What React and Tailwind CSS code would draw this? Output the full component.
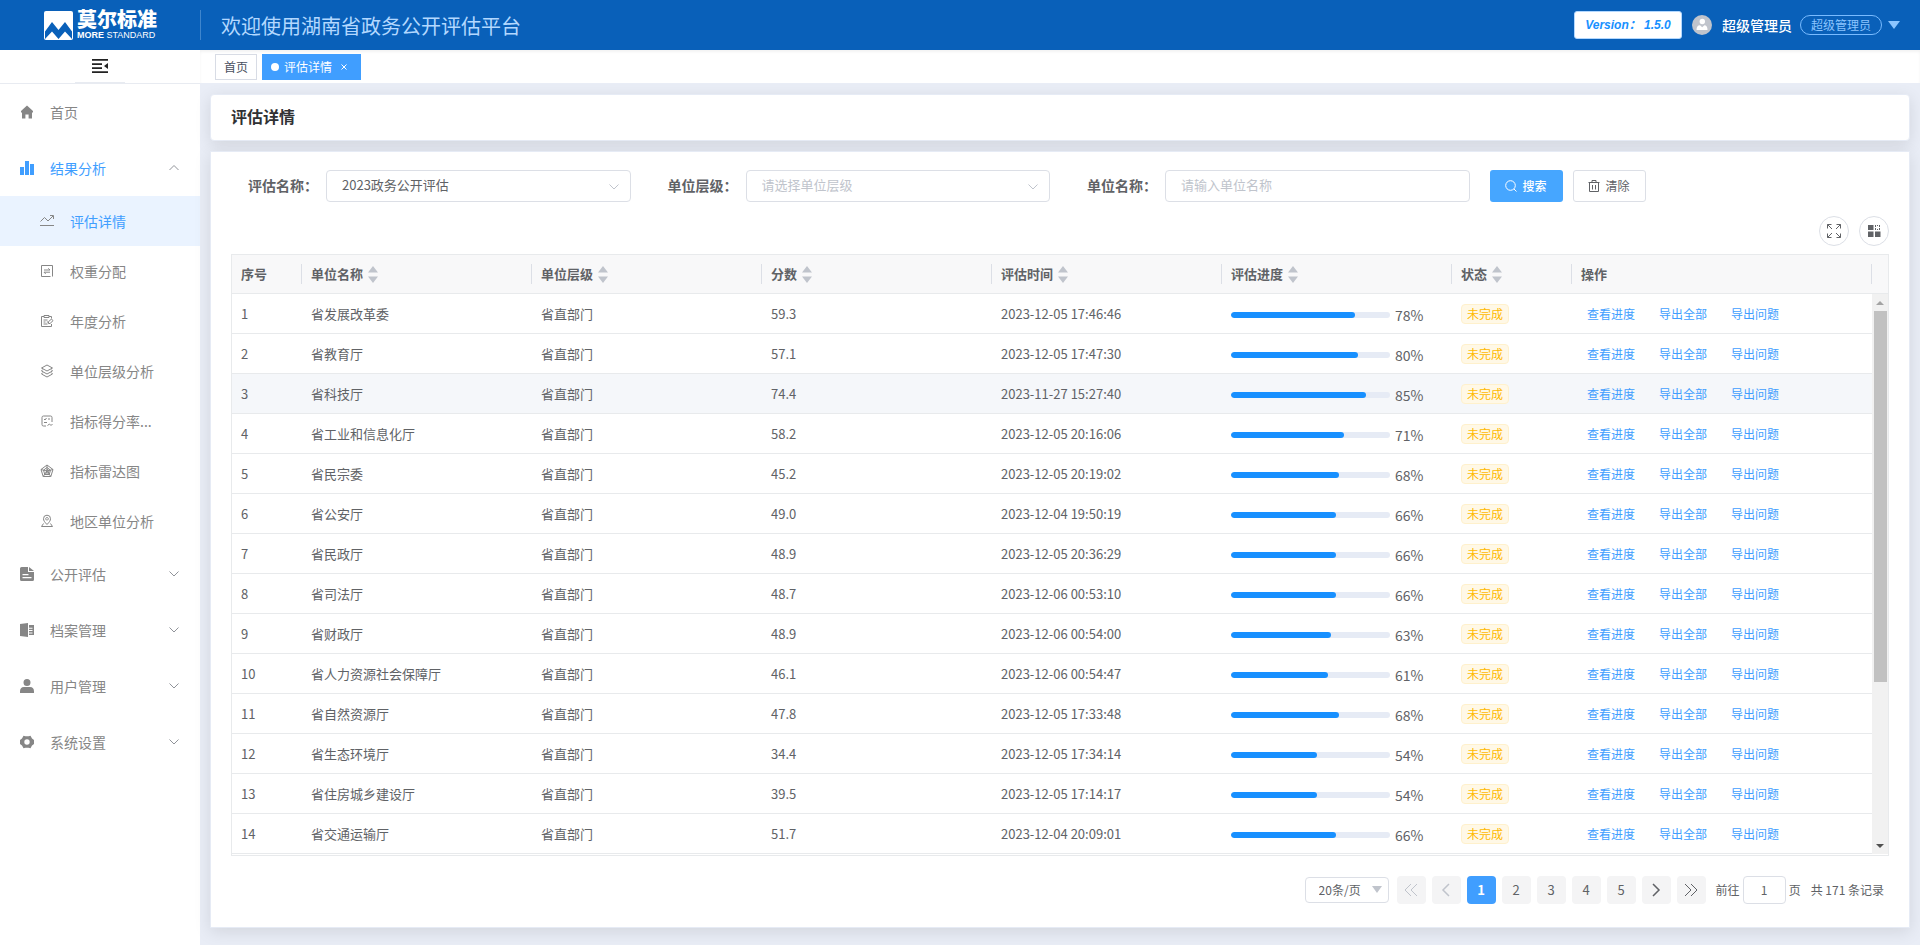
import React, { useState } from 'react'

const rows = [
    { name: "省发展改革委", score: "59.3", time: "2023-12-05 17:46:46", progress: 78 },
    { name: "省教育厅", score: "57.1", time: "2023-12-05 17:47:30", progress: 80 },
    { name: "省科技厅", score: "74.4", time: "2023-11-27 15:27:40", progress: 85 },
    { name: "省工业和信息化厅", score: "58.2", time: "2023-12-05 20:16:06", progress: 71 },
    { name: "省民宗委", score: "45.2", time: "2023-12-05 20:19:02", progress: 68 },
    { name: "省公安厅", score: "49.0", time: "2023-12-04 19:50:19", progress: 66 },
    { name: "省民政厅", score: "48.9", time: "2023-12-05 20:36:29", progress: 66 },
    { name: "省司法厅", score: "48.7", time: "2023-12-06 00:53:10", progress: 66 },
    { name: "省财政厅", score: "48.9", time: "2023-12-06 00:54:00", progress: 63 },
    { name: "省人力资源社会保障厅", score: "46.1", time: "2023-12-06 00:54:47", progress: 61 },
    { name: "省自然资源厅", score: "47.8", time: "2023-12-05 17:33:48", progress: 68 },
    { name: "省生态环境厅", score: "34.4", time: "2023-12-05 17:34:14", progress: 54 },
    { name: "省住房城乡建设厅", score: "39.5", time: "2023-12-05 17:14:17", progress: 54 },
    { name: "省交通运输厅", score: "51.7", time: "2023-12-04 20:09:01", progress: 66 },
];

const columns = [
    { title: "序号", width: "w-[70px]" },
    { title: "单位名称", sortable: true },
    { title: "单位层级", sortable: true },
    { title: "分数", sortable: true },
    { title: "评估时间", sortable: true },
    { title: "评估进度", sortable: true },
    { title: "状态", sortable: true, width: "w-[120px]" },
    { title: "操作", width: "w-[300px]" },
];

// all menu icons share a 14x14 box
const icons = {
    home: <path fill="currentColor" d="M7 .5 13 6v1.5h-1V13.5H8.6V9.5H5.4v4H2v-6H1V6z" />,
    bars: <path fill="currentColor" d="M0 6h4v8H0zM5 0h4v14H5zM10 3h4v11h-4z" />,
    trend: <path fill="none" stroke="currentColor" d="M.5 7.5 4.5 3.5 8 7l5-5M10 1.5h3.5V5M0 11.5h14" />,
    weight: <path fill="none" stroke="currentColor" d="M10.5 12.5h-9v-11h11v11M4 6h6L8.3 4.3M10 8.2H4l1.7 1.7" />,
    year: <path fill="none" stroke="currentColor" d="M4 2.5H1.5v10h10V10M9 2.5h2.5v2M4 1.5h5v2H4zM3.5 6h4M3.5 8h2M6.8 8h1.5M3.5 10h4M8.5 9.5V7.7L11.5 5l1.5 1.7-3 2.8z" />,
    layers: <path fill="none" stroke="currentColor" d="M7 1 12.5 4 7 7 1.500 4zM2.800 5.500 1.500 7 7 10l5.500-3-1.300-1.500M2.800 8.500 1.500 10 7 13l5.500-3-1.300-1.500" />,
    score: <path fill="none" stroke="currentColor" d="M6 12H3.500Q2 12 2 10.500V3.500Q2 2 3.500 2h7Q12 2 12 3.500V8M4 5l1 1 1.500-2M8 5h2M4 8.500h3M7.500 11.500l2-1.500 1.500 1.500 1.500-1.500" />,
    radar: <path fill="none" stroke="currentColor" d="M7 1 13 5.500 10.800 12.500H3.200L1 5.500zM7 3.500l3.500 2.700L9.200 10.500H4.800L3.500 6.200zM7 1v6l6-1.500M7 7l3.800 5.500M7 7l-3.800 5.500M7 7 1 5.500M7 5.500 9 6.500 8.500 9H6z" />,
    area: <path fill="none" stroke="currentColor" d="M7 10.500C4.500 8 3.500 6.500 3.500 4.700a3.500 3.500 0 0 1 7 0C10.500 6.500 9.500 8 7 10.500zM7 3.500a1.300 1.300 0 1 0 .01 0M3.500 9.500 1.500 12.500h11l-2-3" />,
    doc: <path fill="currentColor" fillRule="evenodd" d="M1.500 0H8v5h6v7.500Q14 14 12.500 14h-11Q0 14 0 12.500v-11Q0 0 1.500 0zM9 0l5 4H9zM2.500 7v1.200h6V7zM2.500 10v1.200h9V10z" />,
    archive: <path fill="currentColor" d="M0 1 8 0v14l-8-1zM9 2h5v10H9v-1.500h3.500v-1H9v-1.500h3.500V7H9V5.800h3.500v-1H9z" />,
    user: <path fill="currentColor" d="M7 0a3.500 3.500 0 1 1 0 7 3.500 3.500 0 0 1 0-7zM4 8h6q4 0 4 4.500V14H0v-1.500Q0 8 4 8z" />,
    gear: <path fill="currentColor" fillRule="evenodd" d="M3.500.8 5.500 1.300h3L10.500.8 12 3.500l2 1.500v4l-2 1.500-1.500 2.700-2-.5h-3l-2 .5L2 10.500 0 9V5l2-1.500zM7 4.300a2.700 2.700 0 1 0 0 5.400 2.700 2.700 0 0 0 0-5.400z" />,
};

const subMenu = [
    { label: "评估详情", icon: "trend", active: true },
    { label: "权重分配", icon: "weight" },
    { label: "年度分析", icon: "year" },
    { label: "单位层级分析", icon: "layers" },
    { label: "指标得分率...", icon: "score" },
    { label: "指标雷达图", icon: "radar" },
    { label: "地区单位分析", icon: "area" },
];

const bottomMenu = [
    { label: "公开评估", icon: "doc" },
    { label: "档案管理", icon: "archive" },
    { label: "用户管理", icon: "user" },
    { label: "系统设置", icon: "gear" },
];

function MenuIcon({ name }) {
    return (
        <svg viewBox="0 0 14 14" className="h-3.5 w-3.5 shrink-0">{icons[name]}</svg>
    );
}

function Chevron({ up, className }) {
    return (
        <svg viewBox="0 0 12 12" className={className} fill="none" stroke="currentColor">
            <path d={up ? "M1.500 8 6 3.500 10.500 8" : "M1.500 3.500 6 8l4.500-4.500"} />
        </svg>
    );
}

function Header() {
    return (
        <header className="flex h-[50px] items-center bg-[#0960b9]">
            <div className="flex h-[30px] w-[201px] shrink-0 items-center gap-1 border-r border-[#3f86cd] pl-11">
                <svg viewBox="0 0 29 29" className="h-[29px] w-[29px]">
                    <rect width="29" height="29" rx="2" fill="#fff" />
                    <path fill="#0960b9" d="M1 20.500 8 11l6.500 8L21 11l7 9.500V28L21 20.500 14.500 28 8 20.500 1 28z" />
                </svg>
                <div className="flex flex-col font-['Liberation_Sans','Noto_Sans_CJK_SC',sans-serif] text-white">
                    <span className="text-[20px] leading-5 font-black">莫尔标准</span>
                    <span className="text-[9px] leading-[10px] whitespace-nowrap"><b>MORE</b> STANDARD</span>
                </div>
            </div>
            <h1 className="flex-1 pt-0.5 pl-5 text-[20px] leading-[30px] text-[#b3d8ff]">欢迎使用湖南省政务公开评估平台</h1>
            <div className="flex items-center pr-5">
                <span className="flex h-7 w-[108px] items-center justify-center rounded-[3px] border border-[#b3d8ff] bg-white font-['Liberation_Sans','Noto_Sans_CJK_SC',sans-serif] text-[12px] font-bold whitespace-pre text-[#1890ff] italic">Version： 1.5.0</span>
                <svg viewBox="0 0 20 20" className="ml-2.5 h-5 w-5">
                    <circle cx="10" cy="10" r="10" fill="#c0c4cc" />
                    <circle cx="10.300" cy="6.500" r="2.700" fill="#fff" />
                    <path fill="#fff" d="M4.500 15Q4.500 10.300 8 10.300l2.200 2 2.200-2Q15.500 10.300 15.500 15z" />
                </svg>
                <span className="ml-2.5 text-[14px] font-medium text-white">超级管理员</span>
                <span className="ml-2 flex h-5 w-[82px] items-center justify-center rounded-full border border-[#79bbff] text-[12px] leading-[18px] text-[#8cc5ff]">超级管理员</span>
                <button aria-label="展开用户菜单" className="ml-1.5">
                    <svg viewBox="0 0 12 8" className="h-2 w-3"><path fill="#8cc5ff" d="M0 0h12L6 8z" /></svg>
                </button>
            </div>
        </header>
    );
}

function Sidebar() {
    return (
        <aside className="flex w-[200px] shrink-0 flex-col bg-white text-[14px] text-[#868686]">
            <div className="flex h-[34px] flex-col items-center border-b border-[#e8ebf1]">
                <button aria-label="收起菜单" className="flex flex-1 items-center text-[#222]">
                    <svg viewBox="0 0 16 14" className="h-3.5 w-4 fill-current">
                        <path d="M0 0h16v1.700H0zM0 4.200h10v1.700H0zM0 8.200h10v1.700H0zM0 12.300h16V14H0zM16 4v6l-4-3z" />
                    </svg>
                </button>
                <span className="h-px w-[50px] bg-[#e8ebf1]"></span>
            </div>
            <nav>
                <a href="#" className="flex h-14 items-center gap-4 pl-5"><MenuIcon name="home" />首页</a>
                <a href="#" className="flex h-14 items-center gap-4 pr-5 pl-5 text-[#409eff]">
                    <MenuIcon name="bars" />
                    <span className="flex-1">结果分析</span>
                    <Chevron up className="h-3 w-3 text-[#909399]" />
                </a>
                {subMenu.map((item) => (
                    <a
                        href="#"
                        key={item.label}
                        className={item.active ? "flex h-[50px] items-center gap-4 bg-[#eaf3ff] pl-10" : "flex h-[50px] items-center gap-4 pl-10"}
                    >
                        <MenuIcon name={item.icon} />
                        <span className={item.active ? "text-[#409eff]" : ""}>{item.label}</span>
                    </a>
                ))}
                {bottomMenu.map((item) => (
                    <a href="#" key={item.label} className="flex h-14 items-center gap-4 pr-5 pl-5">
                        <MenuIcon name={item.icon} />
                        <span className="flex-1">{item.label}</span>
                        <Chevron className="h-3 w-3 text-[#909399]" />
                    </a>
                ))}
            </nav>
        </aside>
    );
}

function TabBar() {
    return (
        <div className="flex h-[33px] items-end gap-[5px] bg-white pb-[3px] pl-[15px] text-[12px] shadow-[inset_0_2px_3px_rgba(0,0,0,0.05)]">
            <a href="#" className="flex h-[26px] items-center border border-[#d8dce5] px-2 text-[#495060]">首页</a>
            <a href="#" className="flex h-[26px] w-[99px] items-center border border-[#409eff] bg-[#409eff] pl-2 text-white">
                <span className="mr-[5px] h-2 w-2 rounded-full bg-white"></span>
                评估详情
                <svg viewBox="0 0 6 6" className="ml-[9px] h-1.5 w-1.5 stroke-current" strokeWidth="1"><path d="M.5.5l5 5M5.500.5l-5 5" /></svg>
            </a>
        </div>
    );
}

function SelectBox({ id, options, muted }) {
    return (
        <div className="relative flex-1">
            <select
                id={id}
                className={muted
                    ? "block h-8 w-full appearance-none rounded border border-[#dcdfe6] bg-white px-[15px] pb-0.5 text-[13px] text-[#c0c4cc] outline-none"
                    : "block h-8 w-full appearance-none rounded border border-[#dcdfe6] bg-white px-[15px] pb-0.5 text-[13px] text-[#606266] outline-none"}
            >
                {options.map((o) => <option key={o}>{o}</option>)}
            </select>
            <Chevron className="pointer-events-none absolute top-[11px] right-[11px] h-3 w-3 text-[#c0c4cc]" />
        </div>
    );
}

function FilterForm() {
    const [unit, setUnit] = useState("");
    const labelClass = "w-[95px] shrink-0 pb-[3px] pl-[17px] text-[14px] leading-5 font-bold whitespace-nowrap text-[#606266]";

    return (
        <form className="grid grid-cols-4 gap-5" onSubmit={(e) => e.preventDefault()}>
            <div className="flex items-center">
                <label htmlFor="evalName" className={labelClass}>评估名称：</label>
                <SelectBox id="evalName" options={["2023政务公开评估"]} />
            </div>
            <div className="flex items-center">
                <label htmlFor="unitLevel" className={labelClass}>单位层级：</label>
                <SelectBox id="unitLevel" options={["请选择单位层级"]} muted />
            </div>
            <div className="flex items-center">
                <label htmlFor="unitName" className={labelClass}>单位名称：</label>
                <input
                    id="unitName"
                    value={unit}
                    onChange={(e) => setUnit(e.target.value)}
                    placeholder="请输入单位名称"
                    className="h-8 min-w-0 flex-1 rounded border border-[#dcdfe6] px-[15px] pb-[3px] text-[13px] outline-none placeholder:text-[#c0c4cc]"
                />
            </div>
            <div className="flex items-center gap-2.5 text-[12px]">
                <button className="flex h-8 w-[73px] items-center justify-center gap-[5px] rounded-[3px] bg-[#46a6ff] font-medium text-white">
                    <svg viewBox="0 0 12 12" className="h-3 w-3" fill="none" stroke="currentColor"><circle cx="5.500" cy="5.500" r="4.800" /><path d="m9 9 2.500 2.500" /></svg>
                    搜索
                </button>
                <button type="button" className="flex h-8 w-[73px] items-center justify-center gap-[5px] rounded-[3px] border border-[#dcdfe6] bg-white text-[#606266]" onClick={() => setUnit("")}>
                    <svg viewBox="0 0 12 12" className="h-3 w-3" fill="none" stroke="currentColor"><path d="M.5 2.500h11M4 2.500v-2h4v2M1.500 2.500v9h9v-9M4.500 5v4.500M7.500 5v4.500" /></svg>
                    清除
                </button>
            </div>
        </form>
    );
}

function ToolBar() {
    return (
        <div className="mt-3.5 flex justify-end gap-2.5 text-[#606266]">
            <button aria-label="全屏" className="flex h-[30px] w-[30px] items-center justify-center rounded-full border border-[#dcdfe6]">
                <svg viewBox="0 0 14 14" className="h-3.5 w-3.5" fill="none" stroke="currentColor">
                    <path d="M.5 4.500v-4h4M9.500.5h4v4M13.500 9.500v4h-4M4.500 13.500h-4v-4M.5.5 5 5M13.500.5 9 5M13.500 13.500 9 9M.5 13.500 5 9" />
                </svg>
            </button>
            <button aria-label="列设置" className="flex h-[30px] w-[30px] items-center justify-center rounded-full border border-[#dcdfe6]">
                <svg viewBox="0 0 14 14" className="h-3.5 w-3.5">
                    <path fill="currentColor" d="M1 1h5.500v5H1zM1 7.500h5.500V13H1zM8 7.500h5.500V13H8z" />
                    <path fill="none" stroke="currentColor" strokeDasharray="1 1" d="M8 1.500h5M8.500 2v4M12.500 2v4M8 5.500h5" />
                </svg>
            </button>
        </div>
    );
}

function DataTable() {
    return (
        <div className="mt-2 flex border border-[#e8eaec] pb-px text-[13px] text-[#606266]">
            <div className="min-w-0 flex-1">
                <table className="w-full table-fixed border-separate border-spacing-0 text-left">
                    <thead>
                        <tr className="bg-[#f8f8f9]">
                            {columns.map((col) => (
                                <th key={col.title} className={`h-[39px] border-b border-[#e8eaec] p-0 pl-[9px] ${col.width || ""}`}>
                                    <div className="flex h-5 items-center gap-[5px] border-r border-[#dcdfe6] leading-5">
                                        {col.title}
                                        {col.sortable && (
                                            <svg viewBox="0 0 10 17" className="h-[17px] w-2.5 fill-[#c0c4cc]">
                                                <path d="M5 0l5 6.500H0zM0 10.500h10L5 17z" />
                                            </svg>
                                        )}
                                    </div>
                                </th>
                            ))}
                        </tr>
                    </thead>
                    <tbody>
                        {rows.map((row, i) => (
                            <tr key={row.name} className={i === 2 ? "bg-[#f5f7fa] *:border-b *:border-[#e8eaec]" : "*:border-b *:border-[#e8eaec]"}>
                                <td className="h-10 p-0 pl-[9px]">{i + 1}</td>
                                <td className="h-10 p-0 pl-[9px]">{row.name}</td>
                                <td className="h-10 p-0 pl-[9px]">省直部门</td>
                                <td className="h-10 p-0 pl-[9px]">{row.score}</td>
                                <td className="h-10 p-0 pl-[9px]">{row.time}</td>
                                <td className="h-10 p-0 pt-0.5 pl-[9px]">
                                    <div className="flex items-center gap-[5px] pr-6">
                                        <div className="h-1.5 flex-1 overflow-hidden rounded-full bg-[#e6ebf5]">
                                            <div className="h-full rounded-full bg-[#1890ff]" style={{ width: `${row.progress}%` }}></div>
                                        </div>
                                        <span className="w-[33px] text-[14px] leading-5">{row.progress}%</span>
                                    </div>
                                </td>
                                <td className="h-10 p-0 pt-px pl-[9px]">
                                    <span className="flex h-5 w-12 items-center justify-center rounded border border-[#fff1cc] bg-[#fff8e6] text-[12px] text-[#ffba00]">未完成</span>
                                </td>
                                <td className="h-10 p-0 pt-px pl-[15px]">
                                    <div className="flex gap-6 text-[12px] text-[#409eff]">
                                        <a href="#">查看进度</a>
                                        <a href="#">导出全部</a>
                                        <a href="#">导出问题</a>
                                    </div>
                                </td>
                            </tr>
                        ))}
                    </tbody>
                </table>
            </div>
            <div className="flex w-4 shrink-0 flex-col">
                <div className="h-[39px] border-b border-[#e8eaec] bg-[#f8f8f9]"></div>
                <div className="flex flex-1 flex-col items-center bg-[#f1f1f1]">
                    <svg viewBox="0 0 16 17" className="h-[17px] w-4 shrink-0"><path fill="#a3a3a3" d="M8 7l4 4H4z" /></svg>
                    <div className="w-[13px] flex-[372] bg-[#c1c1c1]"></div>
                    <div className="flex-[155]"></div>
                    <svg viewBox="0 0 16 17" className="h-[17px] w-4 shrink-0"><path fill="#505050" d="M4 7h8l-4 4z" /></svg>
                </div>
            </div>
        </div>
    );
}

function Pagination() {
    const pageClass = "flex h-7 w-[29px] items-center justify-center rounded bg-[#f4f4f5] text-[13px]";

    return (
        <div className="mt-5 flex items-center justify-end pr-[5px] text-[12px] text-[#606266]">
            <div className="relative mr-2">
                <select aria-label="每页条数" className="block h-[26px] w-[84px] appearance-none rounded border border-[#dcdfe6] bg-white pl-[13px] text-[12px] outline-none">
                    <option>20条/页</option>
                </select>
                <svg viewBox="0 0 10 7" className="pointer-events-none absolute top-[9px] right-[7px] h-[7px] w-2.5 fill-[#c0c4cc]"><path d="M0 0h10L5 7z" /></svg>
            </div>
            <div className="flex gap-1.5">
                <button aria-label="首页" disabled className={`${pageClass} text-[#c0c4cc]`}>
                    <svg viewBox="0 0 14 14" className="h-3.5 w-3.5" fill="none" stroke="currentColor"><path d="M7 1 1 7l6 6M13 1 7 7l6 6" /></svg>
                </button>
                <button aria-label="上一页" disabled className={`${pageClass} text-[#c0c4cc]`}>
                    <svg viewBox="0 0 14 14" className="h-3.5 w-3.5" fill="none" stroke="currentColor" strokeWidth="1.500"><path d="M10 1 4 7l6 6" /></svg>
                </button>
                <button className="flex h-7 w-[29px] items-center justify-center rounded bg-[#409eff] text-[13px] font-bold text-white">1</button>
                {[2, 3, 4, 5].map((p) => (
                    <button key={p} className={pageClass}>{p}</button>
                ))}
                <button aria-label="下一页" className={pageClass}>
                    <svg viewBox="0 0 14 14" className="h-3.5 w-3.5" fill="none" stroke="currentColor" strokeWidth="1.500"><path d="m4 1 6 6-6 6" /></svg>
                </button>
                <button aria-label="尾页" className={pageClass}>
                    <svg viewBox="0 0 14 14" className="h-3.5 w-3.5" fill="none" stroke="currentColor"><path d="m1 1 6 6-6 6M7 1l6 6-6 6" /></svg>
                </button>
            </div>
            <label htmlFor="jumper" className="ml-2.5">前往</label>
            <input id="jumper" defaultValue="1" className="mx-[3px] h-7 w-[43px] rounded border border-[#dcdfe6] pb-0.5 text-center text-[12px] outline-none" />
            <span>页</span>
            <span className="ml-2.5">共 171 条记录</span>
        </div>
    );
}

export default function App() {
    const cardClass = "border border-[#e6ebf5] bg-white shadow-[0_4px_16px_rgba(0,0,0,0.1)]";

    return (
        <div className="flex min-h-screen flex-col bg-[#e9edf6] font-['Noto_Sans_CJK_SC','Noto_Sans',sans-serif]">
            <Header />
            <div className="flex flex-1">
                <Sidebar />
                <div className="flex min-w-0 flex-1 flex-col">
                    <TabBar />
                    <main className="flex flex-1 flex-col gap-2.5 px-2.5 pt-[11px] pb-[17px]">
                        <div className={`${cardClass} flex h-[47px] items-center rounded px-5 pb-1`}>
                            <h2 className="text-[16px] leading-5 font-bold text-[#303133]">评估详情</h2>
                        </div>
                        <div className={`${cardClass} flex-1 px-5 pt-[18px] pb-[22px]`}>
                            <FilterForm />
                            <ToolBar />
                            <DataTable />
                            <Pagination />
                        </div>
                    </main>
                </div>
            </div>
        </div>
    );
}
